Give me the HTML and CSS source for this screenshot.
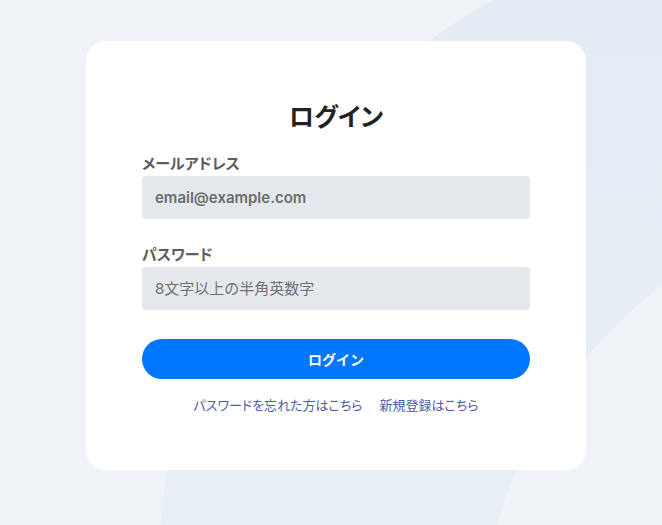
FILE: index.html
```html
<!DOCTYPE html>
<html lang="ja">
<head>
    <meta charset="UTF-8">
    <meta name="viewport" content="width=device-width, initial-scale=1.0">
    <title>ログイン</title>
    <link rel="stylesheet" href="styles.css">
</head>
<body>
    <div class="page">
        <!-- Login card -->
        <form class="card" onsubmit="return false;">
            <h1>ログイン</h1>

            <div class="field">
                <label for="email">メールアドレス</label>
                <input type="email" id="email" placeholder="email@example.com">
            </div>

            <div class="field">
                <label for="password">パスワード</label>
                <input type="password" id="password" class="jp" placeholder="8文字以上の半角英数字">
            </div>

            <button type="submit">ログイン</button>

            <div class="links">
                <a href="#">パスワードを忘れた方はこちら</a>
                <a href="#">新規登録はこちら</a>
            </div>
        </form>
    </div>
</body>
</html>
```

FILE: styles.css
```css
* {
    box-sizing: border-box;
}
body {
    margin: 0;
    min-height: 100vh;
    font-family: Inter, "Noto Sans CJK JP", sans-serif;
    font-feature-settings: "palt";
    background-color: #eff3f7;
    overflow: hidden;
}
/* soft band behind the card */
body::before {
    content: "";
    position: fixed;
    inset: 0;
    background: linear-gradient(180deg, #e4ebf4, #e8eef6);
    clip-path: path("M492,0 L662,0 L662,285 C620,318 530,400 498,525 L161,525 C168,380 250,140 492,0 Z");
}
.page {
    position: relative;
    display: flex;
    justify-content: center;
    padding: 41px 0 0 10px;
}
.card {
    width: 500px;
    height: 429px;
    background-color: #fff;
    border-radius: 20px;
    padding: 60px 56px 0;
}
h1 {
    margin: 0 0 20px;
    font-size: 25px;
    line-height: 32px;
    font-weight: 700;
    text-align: center;
    color: #222;
}
.field {
    margin-bottom: 25px;
}
.field label {
    display: block;
    font-size: 15px;
    line-height: 22px;
    font-weight: 600;
    color: #5c5c5c;
    margin-bottom: 1px;
}
.field input {
    display: block;
    width: 100%;
    height: 43px;
    padding: 0 13px;
    border: none;
    border-radius: 4px;
    background-color: #e4e8ec;
    font-family: inherit;
    font-size: 15px;
    font-weight: 600;
    color: #333;
    outline: none;
}
.field input::placeholder {
    color: #6b6b6b;
}
.field input.jp::placeholder {
    font-weight: 400;
    color: #707070;
}
button {
    display: block;
    width: 100%;
    height: 40px;
    margin-top: 29px;
    border: none;
    border-radius: 20px;
    background-color: #0177fe;
    color: #fff;
    font-family: inherit;
    font-size: 14px;
    font-weight: 700;
    cursor: pointer;
}
.links {
    display: flex;
    justify-content: center;
    gap: 17px;
    margin-top: 16px;
    font-size: 13px;
    line-height: 20px;
}
.links a {
    color: #4a5ba8;
    text-decoration: none;
}
```
